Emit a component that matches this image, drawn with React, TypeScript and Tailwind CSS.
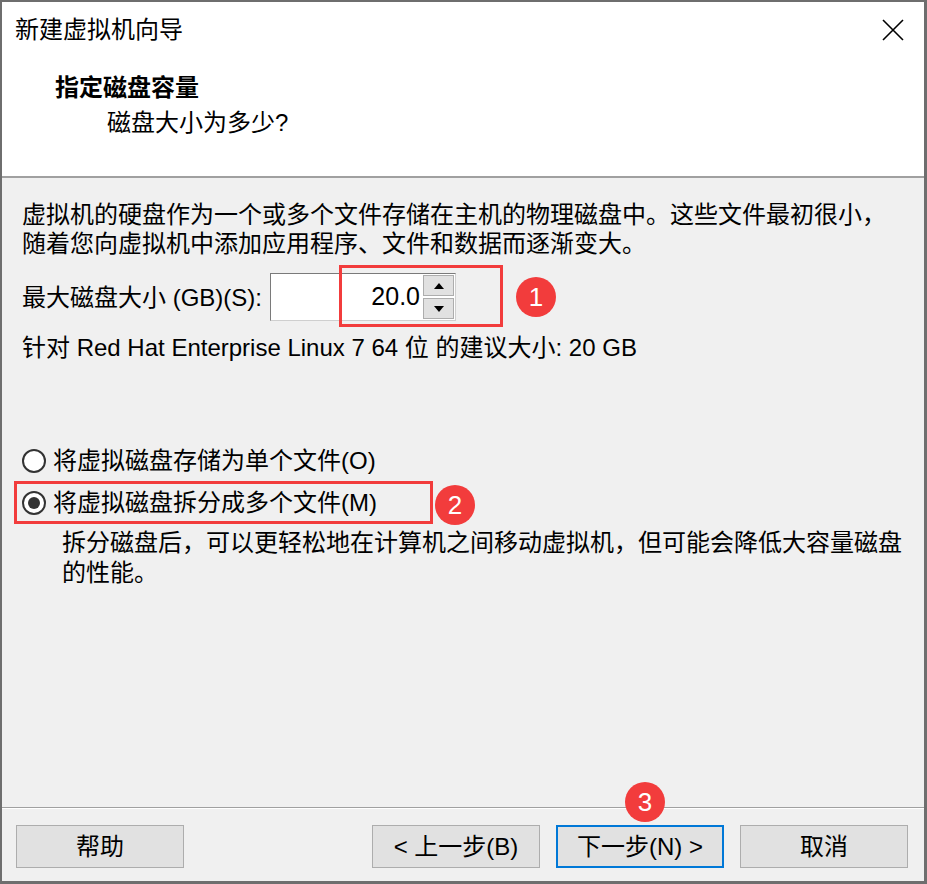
const font = { fontFamily: '"Liberation Sans", "Noto Sans CJK SC", "Microsoft YaHei", sans-serif' };

function Badge({ n, className }: { n: string; className: string }) {
  return (
    <div
      className={`absolute w-[40px] h-[40px] rounded-full bg-[#f23c3c] text-white flex items-center justify-center text-[26px] leading-none ${className}`}
    >
      {n}
    </div>
  );
}

function Radio({ checked }: { checked?: boolean }) {
  return (
    <div className="w-[24px] h-[24px] rounded-full border-2 border-[#333] bg-white flex items-center justify-center shrink-0">
      {checked && <div className="w-[12px] h-[12px] rounded-full bg-[#333]" />}
    </div>
  );
}

function Btn({ label, primary }: { label: string; primary?: boolean }) {
  return (
    <button
      className={`w-[168px] h-[43px] bg-[#e1e1e1] text-[24px] text-black flex items-center justify-center ${
        primary ? "border-2 border-[#0078d7]" : "border border-[#adadad]"
      }`}
    >
      {label}
    </button>
  );
}

export default function App() {
  return (
    <div className="w-[927px] h-[884px] bg-[#6e6e6e] pt-[2px] pl-[2px] pr-[3px] pb-[3px]" style={font}>
      <div className="relative w-[922px] h-[879px] flex flex-col bg-[#f0f0f0] text-black">
        {/* header */}
        <div className="h-[176px] bg-white border-b-2 border-[#a0a0a0] flex flex-col">
          <div className="h-[56px] flex items-center justify-between pl-[13px] pr-[20px]">
            <span className="text-[24px]">新建虚拟机向导</span>
            <svg width="22" height="22" viewBox="0 0 22 22">
              <path d="M1 1 L21 21 M21 1 L1 21" stroke="#000" strokeWidth="1.6" fill="none" />
            </svg>
          </div>
          <div className="mt-[14px] pl-[53px] text-[24px] leading-[32px] font-bold">指定磁盘容量</div>
          <div className="mt-[3px] pl-[105px] text-[24px] leading-[32px]">磁盘大小为多少?</div>
        </div>

        {/* body */}
        <div className="flex-1 flex flex-col pl-[20px] pr-[10px] pt-[22px] text-[24px]">
          <div className="leading-[29px]">
            <div>虚拟机的硬盘作为一个或多个文件存储在主机的物理磁盘中。这些文件最初很小，</div>
            <div>随着您向虚拟机中添加应用程序、文件和数据而逐渐变大。</div>
          </div>

          <div className="mt-[15px] flex items-center h-[48px]">
            <span className="w-[248px] shrink-0 leading-[29px]">最大磁盘大小 (GB)(S):</span>
            <div className="flex h-[48px] w-[186px] bg-white border border-[#7a7a7a] border-r-[#cfcfcf] border-b-[#cfcfcf]">
              <div className="flex-1 flex items-center justify-end pr-[2px] text-[25px]">20.0</div>
              <div className="w-[33px] flex flex-col gap-[2px] p-[1px]">
                <div className="flex-1 bg-[#e1e1e1] border border-[#adadad] flex items-center justify-center">
                  <svg width="10" height="6" viewBox="0 0 10 6"><path d="M5 0 L10 6 L0 6 Z" fill="#000" /></svg>
                </div>
                <div className="flex-1 bg-[#e1e1e1] border border-[#adadad] flex items-center justify-center">
                  <svg width="10" height="6" viewBox="0 0 10 6"><path d="M0 0 L10 0 L5 6 Z" fill="#000" /></svg>
                </div>
              </div>
            </div>
          </div>

          <div className="mt-[12px] leading-[29px]">针对 Red Hat Enterprise Linux 7 64 位 的建议大小: 20 GB</div>

          <div className="mt-[83px] h-[32px] flex items-center">
            <Radio />
            <span className="ml-[7px]">将虚拟磁盘存储为单个文件(O)</span>
          </div>
          <div className="mt-[10px] h-[32px] flex items-center">
            <Radio checked />
            <span className="ml-[7px]">将虚拟磁盘拆分成多个文件(M)</span>
          </div>
          <div className="mt-[9px] pl-[40px] leading-[30px]">
            <div>拆分磁盘后，可以更轻松地在计算机之间移动虚拟机，但可能会降低大容量磁盘</div>
            <div>的性能。</div>
          </div>
        </div>

        {/* footer */}
        <div className="h-[74px] border-t border-[#a0a0a0] flex flex-col">
          <div className="h-px bg-white" />
          <div className="mt-[16px] flex items-center pl-[14px] pr-[16px]">
            <Btn label="帮助" />
            <div className="flex-1" />
            <div className="flex gap-[16px]">
              <Btn label="< 上一步(B)" />
              <Btn label="下一步(N) >" primary />
              <Btn label="取消" />
            </div>
          </div>
        </div>

        {/* annotations */}
        <div className="absolute left-[337px] top-[263px] w-[164px] h-[62px] border-[3px] border-[#f23c3c]" />
        <Badge n="1" className="left-[514px] top-[275px]" />
        <div className="absolute left-[12px] top-[479px] w-[419px] h-[43px] border-[3px] border-[#f23c3c]" />
        <Badge n="2" className="left-[433px] top-[483px]" />
        <Badge n="3" className="left-[623px] top-[780px]" />
      </div>
    </div>
  );
}
